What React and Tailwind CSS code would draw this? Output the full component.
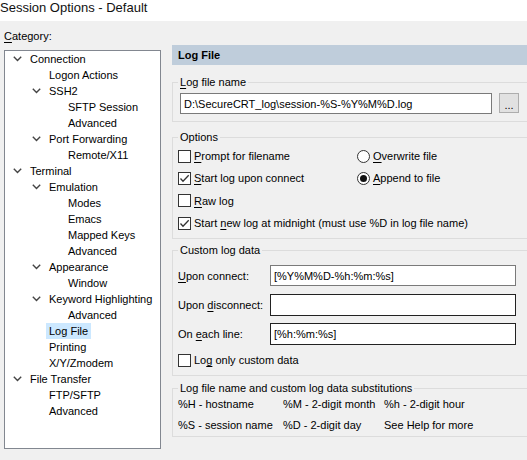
import React from "react";

const tree = [
  { l: 0, t: "Connection", c: true },
  { l: 1, t: "Logon Actions" },
  { l: 1, t: "SSH2", c: true },
  { l: 2, t: "SFTP Session" },
  { l: 2, t: "Advanced" },
  { l: 1, t: "Port Forwarding", c: true },
  { l: 2, t: "Remote/X11" },
  { l: 0, t: "Terminal", c: true },
  { l: 1, t: "Emulation", c: true },
  { l: 2, t: "Modes" },
  { l: 2, t: "Emacs" },
  { l: 2, t: "Mapped Keys" },
  { l: 2, t: "Advanced" },
  { l: 1, t: "Appearance", c: true },
  { l: 2, t: "Window" },
  { l: 1, t: "Keyword Highlighting", c: true },
  { l: 2, t: "Advanced" },
  { l: 1, t: "Log File", sel: true },
  { l: 1, t: "Printing" },
  { l: 1, t: "X/Y/Zmodem" },
  { l: 0, t: "File Transfer", c: true },
  { l: 1, t: "FTP/SFTP" },
  { l: 1, t: "Advanced" },
];

const padFor = [7, 26, 45];

function Chevron() {
  return (
    <svg width="9" height="6" viewBox="0 0 9 6" className="ml-[1px]">
      <polyline points="0.8,0.8 4.5,4.5 8.2,0.8" fill="none" stroke="#444" strokeWidth="1.4" />
    </svg>
  );
}

function U({ children }) {
  return <span className="underline underline-offset-[2px] decoration-[1px]">{children}</span>;
}

function Check({ checked }) {
  return (
    <span className="w-[13px] h-[13px] border border-[#333] bg-white flex items-center justify-center shrink-0">
      {checked && (
        <svg width="11" height="11" viewBox="0 0 11 11">
          <polyline points="1.5,5.5 4,8.2 9.7,2.2" fill="none" stroke="#333" strokeWidth="1.3" />
        </svg>
      )}
    </span>
  );
}

function Radio({ checked }) {
  return (
    <span className="w-[13px] h-[13px] rounded-full border border-[#333] bg-white flex items-center justify-center shrink-0">
      {checked && <span className="w-[7px] h-[7px] rounded-full bg-[#111]" />}
    </span>
  );
}

function CheckRow({ h, checked, children }) {
  return (
    <div className={`flex items-center gap-[3px] ${h}`}>
      <Check checked={checked} />
      <span>{children}</span>
    </div>
  );
}

export default function App() {
  return (
    <div
      className="w-[527px] h-[460px] bg-[#f0f0f0] overflow-hidden text-[11px] leading-[16px] text-black"
      style={{ fontFamily: '"Liberation Sans", Arial, sans-serif' }}
    >
      <div className="h-[21px] bg-white text-[13px] leading-[16px] pt-[0px] text-[#111]">
        Session Options - Default
      </div>
      <div className="flex">
        <div className="pl-[4px] w-[172px] shrink-0">
          <div className="mt-[7px]">
            <U>C</U>ategory:
          </div>
          <div className="mt-[6px] w-[157px] h-[399px] border border-[#828790] bg-white">
            {tree.map((r, i) => (
              <div key={i} className="flex items-center h-[16px]" style={{ paddingLeft: padFor[r.l] }}>
                <div className="w-[15px] flex items-center shrink-0">{r.c && <Chevron />}</div>
                <span className={`px-[3px] leading-[16px] ${r.sel ? "bg-[#cce8ff]" : ""}`}>{r.t}</span>
              </div>
            ))}
          </div>
        </div>

        <div className="w-[380px] shrink-0">
          <div className="mt-[24px] h-[20px] bg-[#bfcddb] flex items-center pl-[6px] font-bold">Log File</div>

          <fieldset className="mt-[9px] border border-[#dcdcdc] pl-[5px] pb-[7px]">
            <legend className="px-[2px]">
              <U>L</U>og file name
            </legend>
            <div className="flex items-start pt-[3px] pl-[2px]">
              <div className="w-[312px] h-[21px] border border-[#7a7a7a] bg-white flex items-center pl-[3px]">
                D:\SecureCRT_log\session-%S-%Y%M%D.log
              </div>
              <div className="ml-[7px] w-[20px] h-[20px] border border-[#adadad] bg-[#e1e1e1] flex items-end justify-center pb-[1px] leading-[12px]">
                ...
              </div>
            </div>
          </fieldset>

          <fieldset className="mt-[7px] border border-[#dcdcdc] pl-[5px] pb-[4px]">
            <legend className="px-[2px]">Options</legend>
            <div className="flex">
              <div className="w-[179px]">
                <CheckRow h="h-[22px]">
                  <U>P</U>rompt for filename
                </CheckRow>
                <CheckRow h="h-[22px]" checked>
                  <U>S</U>tart log upon connect
                </CheckRow>
                <CheckRow h="h-[23px]">
                  <U>R</U>aw log
                </CheckRow>
              </div>
              <div>
                <div className="flex items-center gap-[3px] h-[22px]">
                  <Radio />
                  <span>
                    <U>O</U>verwrite file
                  </span>
                </div>
                <div className="flex items-center gap-[3px] h-[22px]">
                  <Radio checked />
                  <span>
                    <U>A</U>ppend to file
                  </span>
                </div>
              </div>
            </div>
            <CheckRow h="h-[22px]" checked>
              Start <U>n</U>ew log at midnight (must use %D in log file name)
            </CheckRow>
          </fieldset>

          <fieldset className="mt-[3px] border border-[#dcdcdc] pl-[5px] pb-[4px]">
            <legend className="px-[2px]">Custom log data</legend>
            <div className="pt-[7px] flex flex-col gap-[8px]">
              <div className="flex items-center h-[21px]">
                <span className="w-[92px]">
                  <U>U</U>pon connect:
                </span>
                <div className="w-[246px] h-[21px] border border-[#7a7a7a] bg-white flex items-center pl-[3px]">
                  [%Y%M%D-%h:%m:%s]
                </div>
              </div>
              <div className="flex items-center h-[21px]">
                <span className="w-[92px]">
                  Upon <U>d</U>isconnect:
                </span>
                <div className="w-[246px] h-[22px] border border-[#222] bg-white" />
              </div>
              <div className="flex items-center h-[21px]">
                <span className="w-[92px]">
                  On <U>e</U>ach line:
                </span>
                <div className="w-[246px] h-[22px] border border-[#222] bg-white flex items-center pl-[3px]">
                  [%h:%m:%s]
                </div>
              </div>
            </div>
            <div className="mt-[5px]">
              <CheckRow h="h-[22px]">
                Lo<U>g</U> only custom data
              </CheckRow>
            </div>
          </fieldset>

          <fieldset className="mt-[4px] border border-[#dcdcdc] pl-[5px] pb-[3px]">
            <legend className="px-[2px]">Log file name and custom log data substitutions</legend>
            <div className="grid grid-cols-[105px_101px_1fr] gap-y-[5px]">
              <div>%H - hostname</div>
              <div>%M - 2-digit month</div>
              <div>%h - 2-digit hour</div>
              <div>%S - session name</div>
              <div>%D - 2-digit day</div>
              <div>See Help for more</div>
            </div>
          </fieldset>
        </div>
      </div>
    </div>
  );
}
